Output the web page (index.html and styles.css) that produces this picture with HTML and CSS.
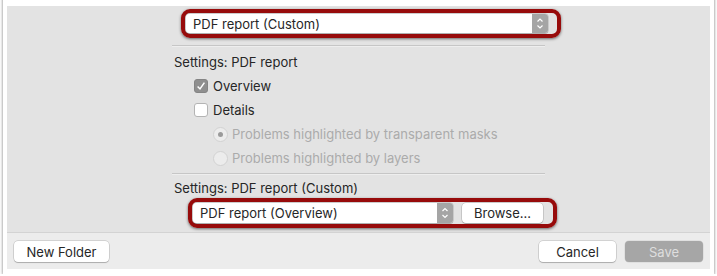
FILE: index.html
```html
<!DOCTYPE html>
<html lang="en">
<head>
  <meta charset="UTF-8" />
  <title>Save dialog – PDF report</title>
  <link rel="stylesheet" href="styles.css">
</head>
<body>
  <div class="window">
    <div class="panel">
      <div class="accessory">
        <div class="column">
          <div class="marker top-marker">
            <div class="popup wide">
              <span class="popup-label">PDF report (Custom)</span>
              <span class="stepper">
                <svg width="16" height="19" viewBox="0 0 16 19"><path d="M5.5 7.5 L8 5 L10.5 7.5 M5.5 11.5 L8 14 L10.5 11.5" fill="none" stroke="#fff" stroke-width="1.2"/></svg>
              </span>
            </div>
          </div>

          <div class="separator"></div>

          <div class="label">Settings: PDF report</div>
          <div class="option check-row">
            <span class="checkbox checked">
              <svg width="14" height="14" viewBox="0 0 14 14"><path d="M3.6 7.4 L6 9.9 L10.4 3.6" fill="none" stroke="#fff" stroke-width="1.5"/></svg>
            </span>
            <span>Overview</span>
          </div>
          <div class="option check-row">
            <span class="checkbox"></span>
            <span>Details</span>
          </div>
          <div class="option radio-row disabled">
            <span class="radio selected"></span>
            <span>Problems highlighted by transparent masks</span>
          </div>
          <div class="option radio-row disabled">
            <span class="radio"></span>
            <span>Problems highlighted by layers</span>
          </div>

          <div class="separator lower"></div>

          <div class="label custom">Settings: PDF report (Custom)</div>
          <div class="marker bottom-marker">
            <div class="popup narrow">
              <span class="popup-label">PDF report (Overview)</span>
              <span class="stepper">
                <svg width="16" height="20" viewBox="0 0 16 20"><path d="M5.5 8 L8 5.5 L10.5 8 M5.5 12 L8 14.5 L10.5 12" fill="none" stroke="#fff" stroke-width="1.2"/></svg>
              </span>
            </div>
            <button class="button browse">Browse...</button>
          </div>
        </div>
      </div>

      <div class="footer">
        <button class="button">New Folder</button>
        <div class="footer-right">
          <button class="button">Cancel</button>
          <button class="button primary-disabled">Save</button>
        </div>
      </div>
    </div>
  </div>
</body>
</html>
```

FILE: styles.css
```css
body {
  margin: 0;
  background: #fff;
  font-family: "Inter", "Liberation Sans", sans-serif;
  font-size: 13px;
  color: #262626;
}

.window {
  margin: -4px 3px 0;
  padding: 10px 4px 5px;
  background: #fff;
  box-shadow: 0 1px 3px rgba(0,0,0,0.55);
}

.panel {
  height: 263px;
  display: flex;
  flex-direction: column;
  background: #e3e3e3;
}

.accessory {
  flex: 1;
  padding-top: 3px;
}

.column {
  width: 373px;
  margin: 0 auto;
}

/* red annotation rings */
.marker {
  display: flex;
  align-items: center;
  gap: 9px;
  border: 4px solid #970b0b;
  border-radius: 9px;
  padding: 1px 5px 1px 1px;
  box-shadow: 0 1px 3px rgba(0,0,0,0.55);
}

.top-marker {
  width: 366px;
  margin-left: 9px;
}

.bottom-marker {
  width: 355px;
  margin-left: 16px;
}

.popup {
  display: flex;
  align-items: center;
  height: 19px;
  background: #fff;
  border-radius: 3px;
  box-shadow: 0 0 0 0.5px rgba(0,0,0,0.2), 0 1px 1px rgba(0,0,0,0.15);
  overflow: hidden;
}

.popup.wide { width: 362px; }
.popup.narrow { width: 260px; height: 20px; }

.popup-label {
  flex: 1;
  padding-left: 7px;
  white-space: nowrap;
}

.stepper {
  display: flex;
  width: 16px;
  height: 100%;
  background: #a5a5a5;
}

.separator {
  height: 1px;
  margin-top: 7px;
  background: #c6c6c6;
  border-bottom: 1px solid #eeeeee;
}

.separator.lower {
  margin-top: 3px;
}

.label {
  line-height: 24px;
  margin-top: 3px;
  padding-left: 2px;
}

.label.custom {
  line-height: 20px;
  margin-top: 3px;
}

.option {
  display: flex;
  align-items: center;
  gap: 5px;
  height: 24px;
}

.check-row { padding-left: 22px; }
.radio-row { padding-left: 41px; gap: 4px; }

.disabled { color: #ababab; }

.checkbox {
  display: flex;
  width: 14px;
  height: 14px;
  box-sizing: border-box;
  background: #fff;
  border: 1px solid #b4b4b4;
  border-radius: 3px;
}

.checkbox.checked {
  background: #8f8f8f;
  border-color: #848484;
}

.checkbox.checked svg {
  margin: -1px;
}

.radio {
  position: relative;
  width: 15px;
  height: 15px;
  box-sizing: border-box;
  border: 1px solid #d2d2d2;
  border-radius: 50%;
  background: #ececec;
}

.radio.selected::after {
  content: "";
  position: absolute;
  left: 4px;
  top: 4px;
  width: 5px;
  height: 5px;
  border-radius: 50%;
  background: #9a9a9a;
}

.button {
  height: 21px;
  padding: 0;
  border: none;
  border-radius: 4px;
  background: #fff;
  font-family: inherit;
  font-size: 13px;
  color: #262626;
  box-shadow: 0 0 0 0.5px rgba(0,0,0,0.22), 0 1px 1px rgba(0,0,0,0.18);
}

.browse {
  width: 81px;
  height: 20px;
}

.footer {
  display: flex;
  justify-content: space-between;
  padding: 8px 7px 7px;
  background: #ececec;
  border-top: 1px solid #d3d3d3;
}

.footer .button { width: 95px; }

.footer-right {
  display: flex;
  gap: 9px;
}

.footer-right .button { width: 77px; }

.footer-right .primary-disabled {
  width: 78px;
  background: #a6a6a6;
  color: #dedede;
  box-shadow: 0 0 0 0.5px rgba(0,0,0,0.1);
}
```
